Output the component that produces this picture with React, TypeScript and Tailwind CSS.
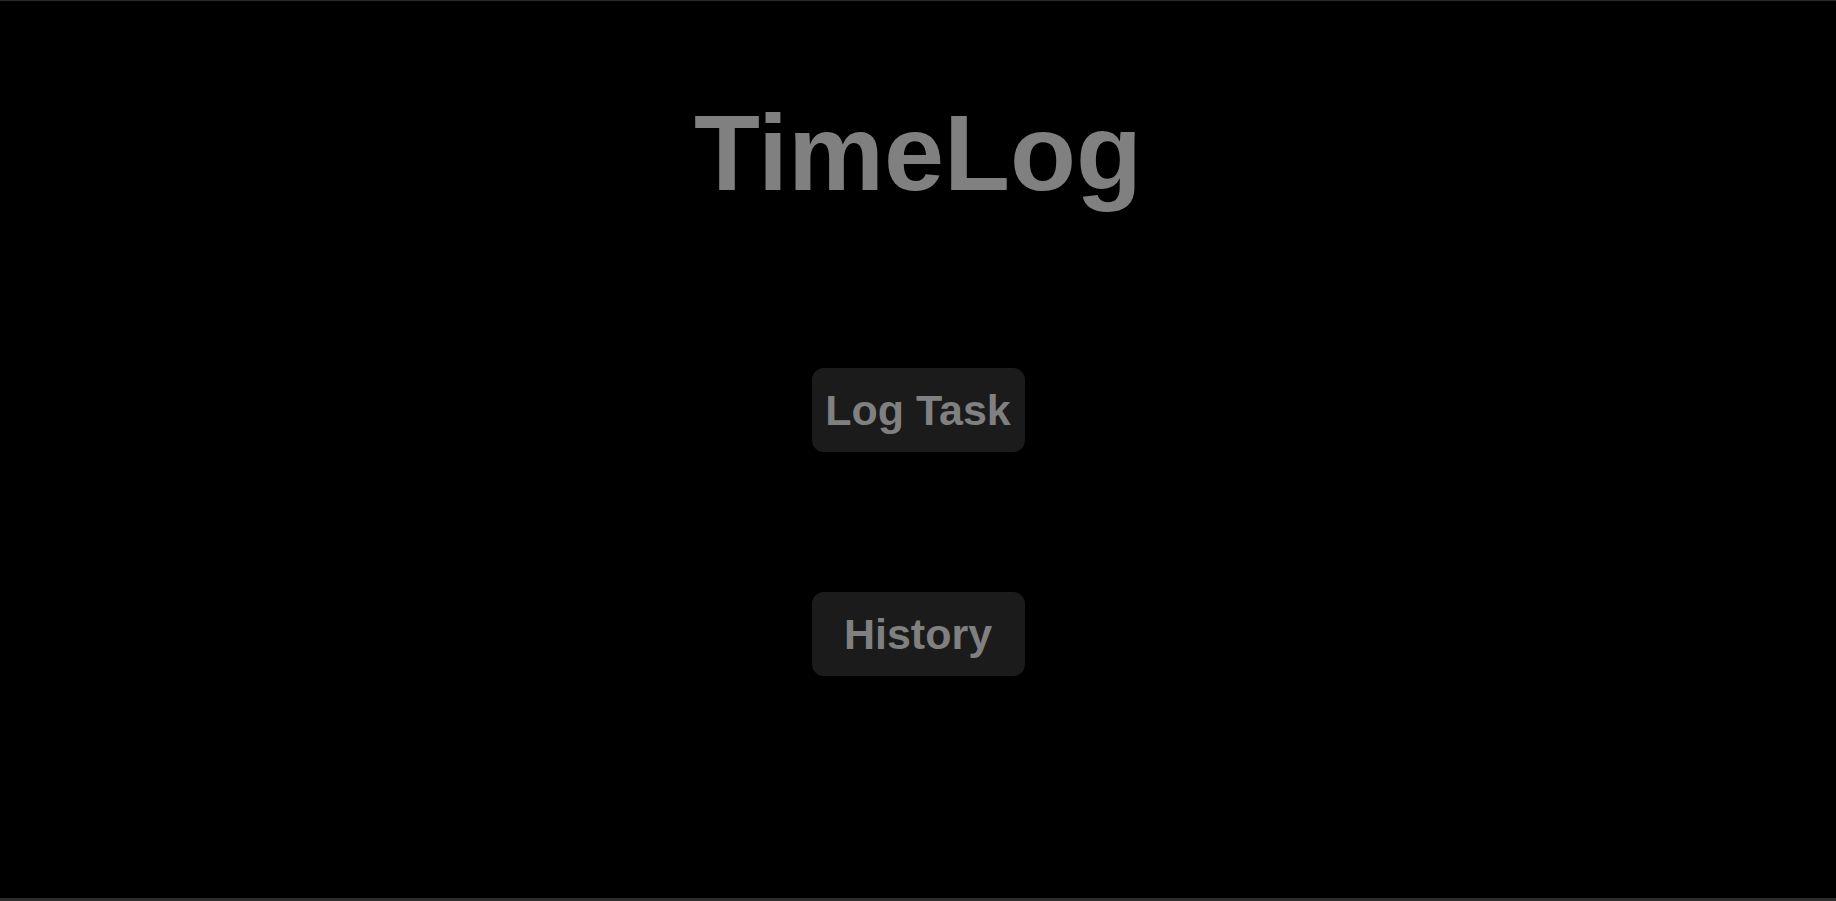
import React from 'react';

const font = { fontFamily: '"Liberation Sans", Arial, sans-serif' };

function MenuButton({ label }: { label: string }) {
  return (
    <button
      type="button"
      className="flex h-[84px] w-[213px] items-center justify-center rounded-[12px] bg-[#1b1b1b] text-[43px] leading-none font-bold text-[#808080]"
    >
      {label}
    </button>
  );
}

export default function App() {
  return (
    <div
      className="flex h-[901px] w-full flex-col items-center border-t border-b-[3px] border-[#2c2c2c] bg-black"
      style={font}
    >
      <h1 className="mt-[98px] text-[108px] leading-none font-bold text-[#808080]">
        TimeLog
      </h1>
      <div className="mt-[161px] flex flex-col items-center gap-[140px]">
        <MenuButton label="Log Task" />
        <MenuButton label="History" />
      </div>
    </div>
  );
}
